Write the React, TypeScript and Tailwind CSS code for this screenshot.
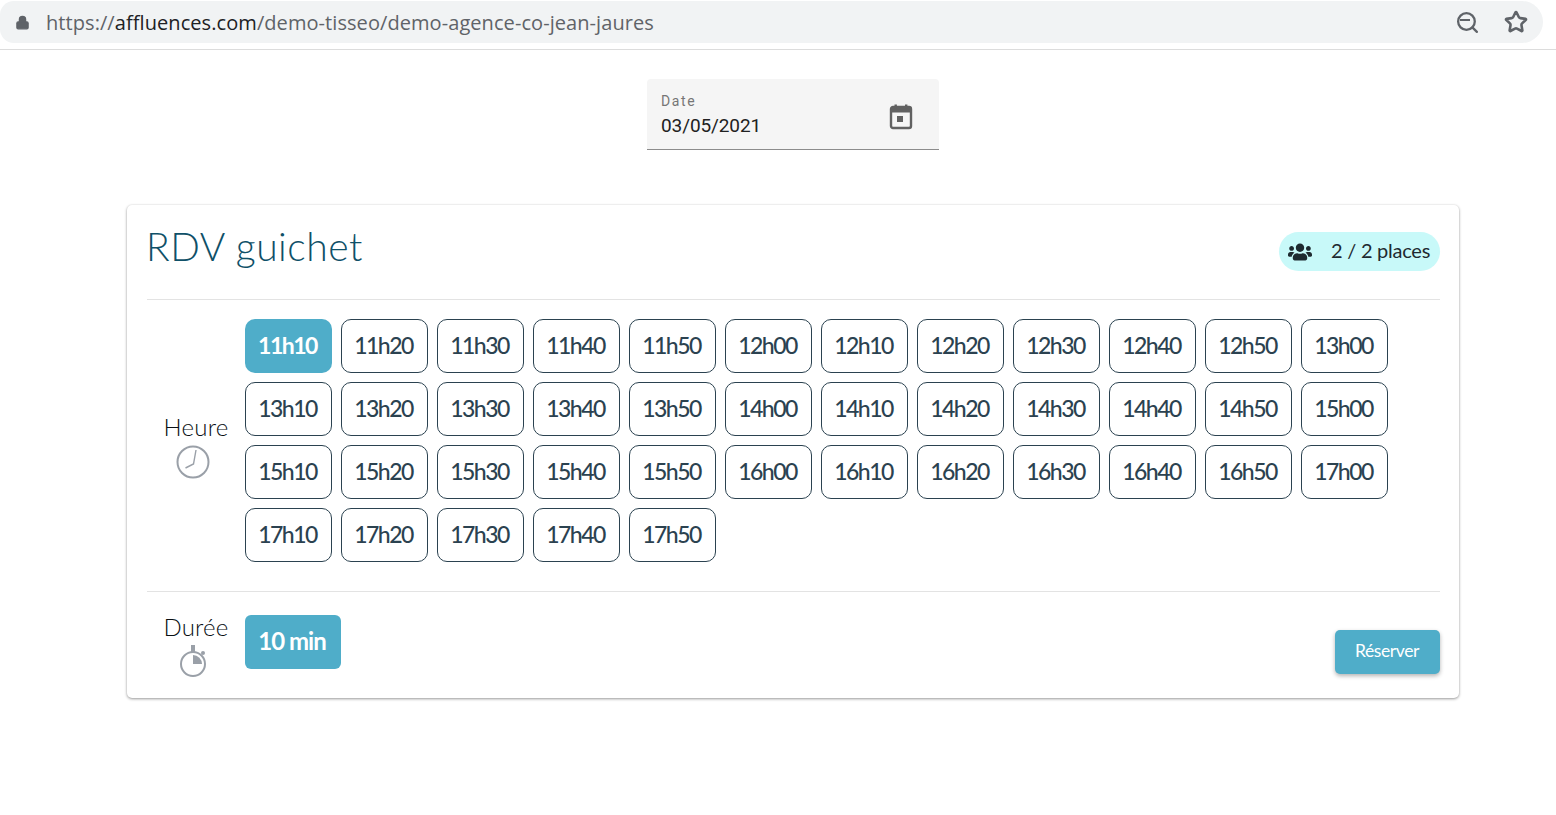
import { Lock, Search, Star } from "lucide-react";
import { FaUsers } from "react-icons/fa";

const SLOTS = [
  "11h10", "11h20", "11h30", "11h40", "11h50", "12h00", "12h10", "12h20", "12h30", "12h40", "12h50", "13h00",
  "13h10", "13h20", "13h30", "13h40", "13h50", "14h00", "14h10", "14h20", "14h30", "14h40", "14h50", "15h00",
  "15h10", "15h20", "15h30", "15h40", "15h50", "16h00", "16h10", "16h20", "16h30", "16h40", "16h50", "17h00",
  "17h10", "17h20", "17h30", "17h40", "17h50",
];

function AddressBar() {
  return (
    <div className="h-[50px] border-b border-[#dcdcdc] pt-px">
      <div className="flex h-[42px] w-[1543px] items-center rounded-r-[21px] rounded-l-[14px] bg-[#f1f3f4] pl-[15px] pr-[14px] font-['Open_Sans',sans-serif]">
        <Lock size={15} className="fill-[#5f6368] text-[#5f6368]" />
        <div className="ml-[16px] pt-[1px] text-[20px] tracking-[0.07px] text-[#5f6368]">
          https://<span className="text-[#202124]">affluences.com</span>/demo-tisseo/demo-agence-co-jean-jaures
        </div>
        <div className="ml-auto flex items-center gap-[24px] text-[#5f6368]">
          <div className="relative">
            <Search size={25} strokeWidth={2.2} />
            <div className="absolute left-[5px] top-[9px] h-[2px] w-[10px] bg-[#5f6368]" />
          </div>
          <Star size={24} strokeWidth={2.6} className="mr-px" />
        </div>
      </div>
    </div>
  );
}

function CalendarIcon() {
  return (
    <svg width="24" height="26" viewBox="0 0 24 26" fill="none" className="mt-[5px] block">
      <rect x="2" y="3" width="20" height="21" rx="2" stroke="#616161" strokeWidth="2.4" />
      <rect x="2" y="3" width="20" height="5.5" fill="#616161" />
      <rect x="5.5" y="0.5" width="2.4" height="4" fill="#616161" />
      <rect x="16" y="0.5" width="2.4" height="4" fill="#616161" />
      <rect x="8" y="12" width="6" height="6" fill="#616161" />
    </svg>
  );
}

function DateField() {
  return (
    <div className="ml-[647px] flex h-[71px] w-[292px] items-center justify-between rounded-t border-b border-[#8c8c8c] bg-[#f5f5f5] pl-[14px] pr-[26px]">
      <div className="pt-[2px] font-['Roboto',sans-serif]">
        <div className="text-[14px] leading-[16px] tracking-[1.6px] text-[#757575]">Date</div>
        <div className="mt-[5px] text-[19px] leading-[24px] tracking-[-0.1px] text-[#212121]">03/05/2021</div>
      </div>
      <CalendarIcon />
    </div>
  );
}

function ClockIcon() {
  return (
    <svg width="34" height="34" viewBox="0 0 34 34" fill="none" stroke="#9aa0a8" className="block">
      <circle cx="17" cy="17" r="15.5" strokeWidth="2" />
      <path d="M20 5 L17.5 19 L9.5 23" strokeWidth="1.4" />
    </svg>
  );
}

function TimerIcon() {
  return (
    <svg width="28" height="34" viewBox="0 0 28 34" fill="none" className="block">
      <circle cx="14" cy="20" r="12" stroke="#9aa0a8" strokeWidth="2" />
      <path d="M14 20 V11 A9 9 0 0 1 23 20 Z" fill="#9aa0a8" />
      <rect x="12" y="1" width="4" height="7" fill="#9aa0a8" />
      <circle cx="24" cy="9" r="2" fill="#9aa0a8" />
    </svg>
  );
}

function Slot({ label, selected }: { label: string; selected?: boolean }) {
  return (
    <button
      className={
        selected
          ? "h-[54px] w-[87px] rounded-[10px] bg-[#4fadc9] pb-[2px] pr-[2px] text-[23px] font-bold tracking-[-1.5px] text-white"
          : "h-[54px] w-[87px] rounded-[10px] border border-[#2b4250] bg-white pb-[2px] pr-[2px] text-[23px] font-medium tracking-[-1.5px] text-[#2b4250]"
      }
    >
      {label}
    </button>
  );
}

export default function App() {
  return (
    <div className="min-h-[815px] bg-white font-['Lato',sans-serif]">
      <AddressBar />
      <div className="pt-[29px]">
        <DateField />
      </div>
      <div className="ml-[127px] mt-[55px] h-[493px] w-[1332px] rounded-[5px] bg-white pl-[20px] pr-[19px] shadow-[0_1px_3px_rgba(0,0,0,0.4),0_0_2px_rgba(0,0,0,0.06)]">
        <div className="flex h-[95px] items-start justify-between border-b border-[#e3e3e3]">
          <h1 className="-ml-px pt-[17px] text-[39px] font-light leading-[48px] tracking-[0.55px] text-[#0f5068]">RDV guichet</h1>
          <div className="mt-[27px] flex h-[39px] w-[161px] items-center rounded-full bg-[#c8f9f9] pl-[9px] text-[#1e2a30]">
            <FaUsers size={24} />
            <span className="mb-[3px] ml-[19px] whitespace-nowrap text-[20px] tracking-[-0.25px]">2 / 2 places</span>
          </div>
        </div>

        <div className="flex h-[292px] border-b border-[#e3e3e3] pt-[19px]">
          <div className="flex w-[98px] flex-col items-center pt-[94px]">
            <div className="text-[24px] font-light leading-[28px] tracking-[0.2px] text-[#0a0f14]">Heure</div>
            <div className="mr-[6px] mt-[4px]"><ClockIcon /></div>
          </div>
          <div className="grid h-[243px] grid-cols-[repeat(12,87px)] content-start gap-x-[9px] gap-y-[9px]">
            {SLOTS.map((s, i) => (
              <Slot key={s} label={s} selected={i === 0} />
            ))}
          </div>
        </div>

        <div className="flex items-start pt-[23px]">
          <div className="flex w-[98px] flex-col items-center">
            <div className="-mt-[2px] text-[24px] font-light leading-[28px] tracking-[0.2px] text-[#0a0f14]">Durée</div>
            <div className="mr-[6px] mt-[3px]"><TimerIcon /></div>
          </div>
          <button className="h-[54px] w-[96px] rounded-[6px] bg-[#4fadc9] pb-[2px] pr-[2px] text-[24px] font-bold tracking-[-1px] text-white">
            10 min
          </button>
          <button className="ml-auto mt-[15px] h-[44px] w-[105px] rounded-[5px] bg-[#4fadc9] pb-[2px] pr-[1px] text-[17.5px] tracking-[-0.4px] text-white shadow-[0_2px_4px_rgba(0,0,0,0.3)]">
            Réserver
          </button>
        </div>
      </div>
    </div>
  );
}
